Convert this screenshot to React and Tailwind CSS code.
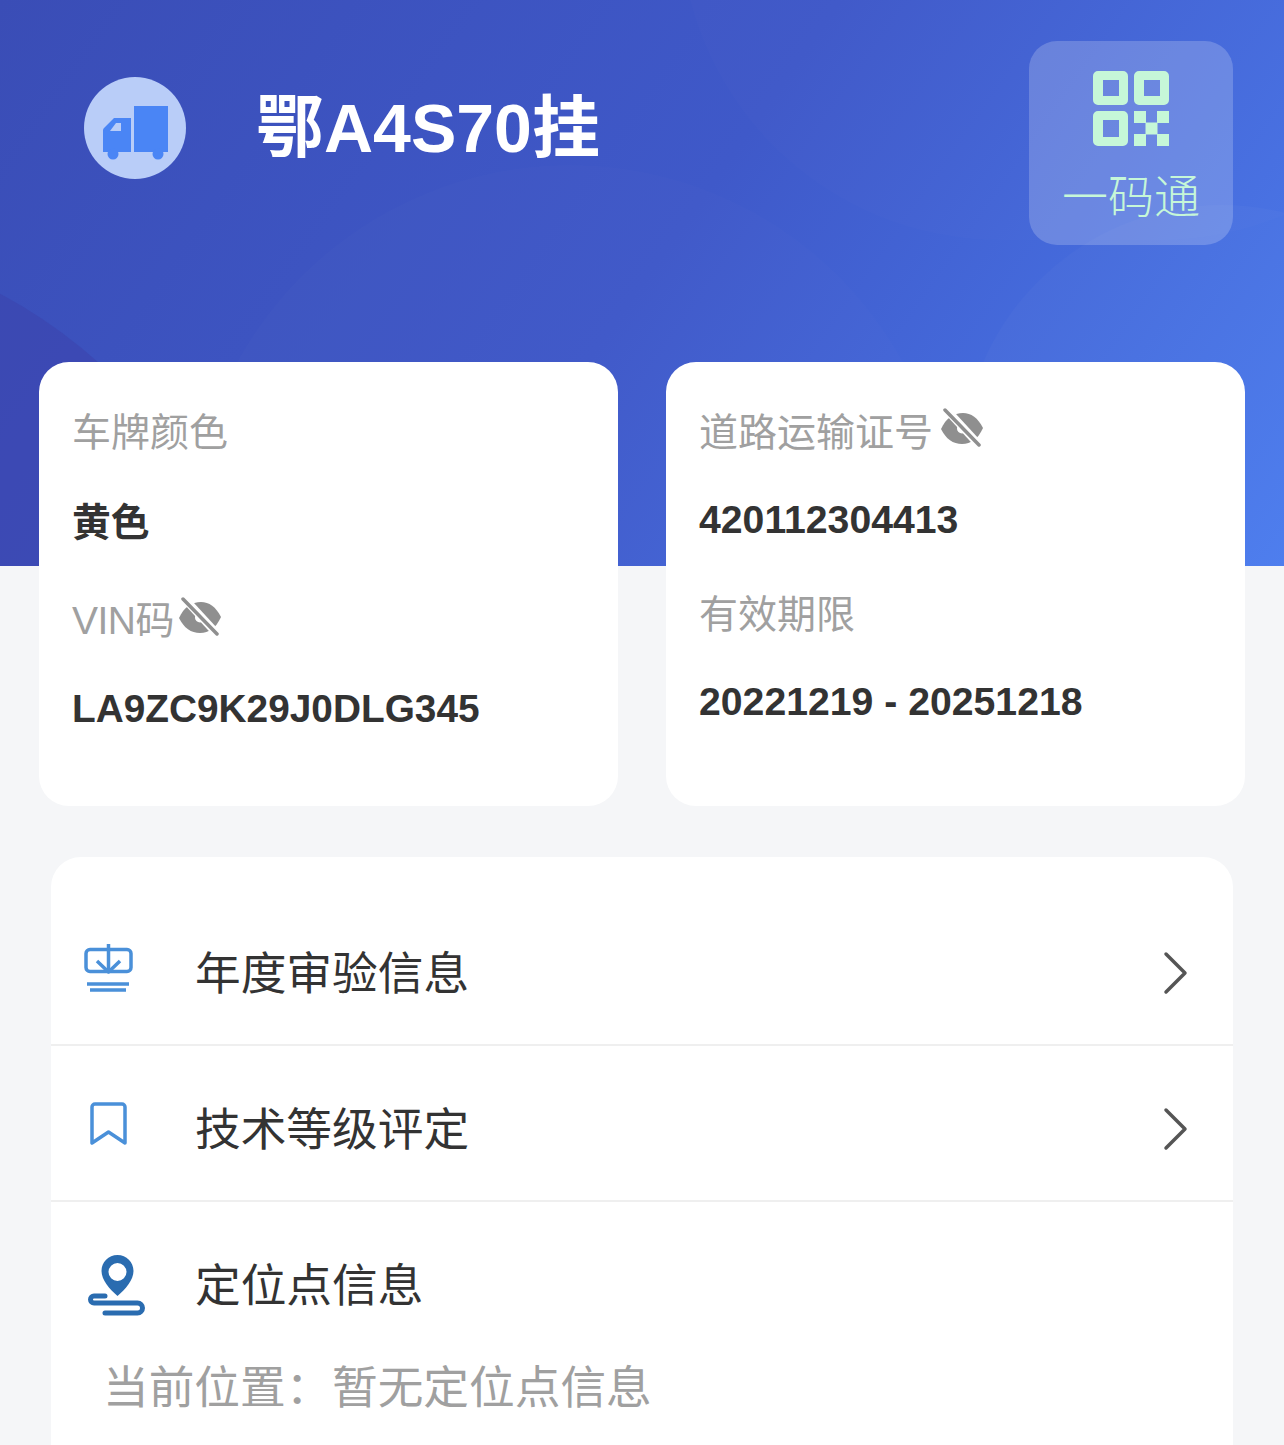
const EyeOff = ({ className }) => (
  <svg className={className} viewBox="0 0 42 40" fill="none">
    <path d="M0 21C5 10 13 5 22 5c8 0 15 5 20 15C37 31 30 36 21 36 12 36 5 31 0 21Z" fill="#8f8f8f" />
    <circle cx="21" cy="20.500" r="5" fill="#fff" />
    <path d="M4 0l35 38" stroke="#fff" strokeWidth="8" />
    <path d="M4 2l34 35" stroke="#8f8f8f" strokeWidth="3.500" strokeLinecap="round" />
  </svg>
);

const Chevron = () => (
  <svg className="h-[44px] w-[26px] shrink-0" viewBox="0 0 26 44" fill="none">
    <path d="M4 3l19 19L4 41" stroke="#555" strokeWidth="3.500" strokeLinecap="round" strokeLinejoin="round" />
  </svg>
);

const InfoItem = ({ label, value, icon, labelClass, valueClass }) => (
  <>
    <div className={`flex h-[48px] items-center whitespace-nowrap text-[39px] leading-[48px] text-[#a0a0a0] ${labelClass}`}>
      {label}
      {icon}
    </div>
    <div className={`h-[48px] font-bold leading-[48px] text-[#333] ${valueClass}`}>{value}</div>
  </>
);

const MenuRow = ({ icon, title, arrow = true, className }) => (
  <div className={`flex h-[142px] items-center pl-[144px] pr-[45px] ${className}`}>
    <div className="absolute left-[84px] flex w-[64px] justify-start">{icon}</div>
    <span className="flex-1 pt-[4px] text-[45.700px] leading-[60px] text-[#333]">{title}</span>
    {arrow && <Chevron />}
  </div>
);

export default function App() {
  return (
    <div
      className="relative h-[1445px] overflow-hidden bg-[#f5f6f8]"
      style={{ fontFamily: '"Liberation Sans", "Noto Sans CJK SC", sans-serif' }}
    >
      {/* header */}
      <div className="relative h-[566px] overflow-hidden bg-[linear-gradient(125deg,#3a4db6_0%,#3f59c9_50%,#4a7bee_100%)]">
        <div className="absolute left-[-735px] top-[235px] h-[1000px] w-[1000px] rounded-full bg-[#3c44ad]/60" />
        <div className="absolute left-[190px] top-[165px] h-[760px] w-[760px] rounded-full bg-white/[0.012]" />
        <div className="absolute left-[680px] top-[-400px] h-[640px] w-[800px] rounded-full bg-white/[0.01]" />
        <div className="absolute left-[962px] top-[205px] h-[520px] w-[520px] rounded-full bg-white/[0.025]" />

        <div className="relative flex pl-[84px] pr-[51px] pt-[41px]">
          <div className="mt-[36px] flex h-[102px] w-[102px] shrink-0 items-center justify-center rounded-full bg-[#b9cdf8]">
            <svg className="ml-[1px] mt-[6px] h-[60px] w-[66px] blur-[0.7px]" viewBox="0 0 66 60" fill="#4a85f5">
              <path d="M31 5h34v46H31z" />
              <path fillRule="evenodd" d="M11 17h17v34H0V30a4 4 0 0 1 1-3Zm2 5-6 8h11v-8Z" />
              <circle cx="10" cy="53" r="5.500" />
              <circle cx="55" cy="53" r="5.500" />
            </svg>
          </div>
          <h1 className="ml-[70px] mt-[43px] flex-1 text-[68px] font-bold leading-[88px] text-white">鄂A4S70挂</h1>
          <div className="flex h-[204px] w-[204px] shrink-0 flex-col items-center rounded-[28px] bg-white/20 pt-[29px] text-[#c6f7d8]">
            <svg className="h-[76px] w-[76px]" viewBox="0 0 76 76" fill="currentColor">
              <path fillRule="evenodd" d="M5 1h25a5 5 0 0 1 5 5v24a5 5 0 0 1-5 5H5a5 5 0 0 1-5-5V6a5 5 0 0 1 5-5Zm5 9v16h16V10Z" />
              <path fillRule="evenodd" d="M46 1h25a5 5 0 0 1 5 5v24a5 5 0 0 1-5 5H46a5 5 0 0 1-5-5V6a5 5 0 0 1 5-5Zm5 9v16h16V10Z" />
              <path fillRule="evenodd" d="M5 41h25a5 5 0 0 1 5 5v25a5 5 0 0 1-5 5H5a5 5 0 0 1-5-5V46a5 5 0 0 1 5-5Zm5 9v17h16V50Z" />
              <path d="M41 41h12v12H41zM64 41h12v12H64zM52.500 52.500h12v12h-12zM41 64h12v12H41zM64 64h12v12H64z" />
            </svg>
            <span className="mt-[21px] text-[46px] font-light leading-[60px]">一码通</span>
          </div>
        </div>
      </div>

      {/* info cards */}
      <div className="relative mt-[-204px] flex gap-[48px] px-[39px]">
        <div className="h-[444px] flex-1 rounded-[30px] bg-white pl-[33px] pt-[47px]">
          <InfoItem label="车牌颜色" value="黄色" valueClass="mt-[42px] text-[38.800px]" />
          <InfoItem
            label="VIN码"
            value="LA9ZC9K29J0DLG345"
            labelClass="mt-[50px] tracking-[-0.5px]"
            valueClass="mt-[40px] text-[38.800px]"
            icon={<EyeOff className="ml-[5px] mt-[-8px] h-[40px] w-[42px]" />}
          />
        </div>
        <div className="h-[444px] flex-1 rounded-[30px] bg-white pl-[33px] pt-[47px]">
          <InfoItem
            label="道路运输证号"
            value="420112304413"
            valueClass="mt-[39px] text-[39.200px]"
            icon={<EyeOff className="ml-[8px] mt-[-10px] h-[40px] w-[42px]" />}
          />
          <InfoItem label="有效期限" value="20221219 - 20251218" labelClass="mt-[47px]" valueClass="mt-[39px] text-[39.200px]" />
        </div>
      </div>

      {/* menu */}
      <div className="mx-[51px] mt-[51px] h-[620px] rounded-[30px] bg-white pt-[45px]">
        <MenuRow
          title="年度审验信息"
          icon={
            <svg className="mt-[-10px] h-[48px] w-[50px]" viewBox="0 0 50 48" fill="none" stroke="#4a90d9" strokeWidth="3.500">
              <rect x="2" y="5.500" width="45" height="22" rx="4" />
              <path d="M24.500 0v27" />
              <path d="M13 17l11.500 11L36 17" strokeLinejoin="round" />
              <path d="M3 40h42M6 46h36" />
            </svg>
          }
        />
        <div className="border-t-2 border-[#efefef] pt-[12px]">
          <MenuRow
            title="技术等级评定"
            icon={
              <svg className="ml-[5px] mt-[-10px] h-[44px] w-[39px]" viewBox="0 0 39 44" fill="none" stroke="#4a90d9" strokeWidth="3.500" strokeLinejoin="round" strokeLinecap="round">
                <path d="M6 2h27a3 3 0 0 1 3 3v36L19.500 30 3 41V5a3 3 0 0 1 3-3Z" />
              </svg>
            }
          />
        </div>
        <div className="border-t-2 border-[#efefef] pt-[12px]">
          <MenuRow
            title="定位点信息"
            arrow={false}
            icon={
              <svg className="ml-[4px] mt-[2px] h-[62px] w-[58px]" viewBox="0 0 58 62" fill="none">
                <path fillRule="evenodd" d="M29.500 0c9 0 16 7 16 16 0 9-8 18-16 25-8-7-16-16-16-25 0-9 7-16 16-16Zm0 8a9 9 0 1 0 0 18 9 9 0 0 0 0-18Z" fill="#2a6cb0" />
                <path d="M17 41H6a3.500 3.500 0 0 0 0 7H49.500a5 5 0 0 1 0 10H17" stroke="#2a6cb0" strokeWidth="5" strokeLinecap="round" />
              </svg>
            }
          />
        </div>
        <p className="mt-[10px] flex whitespace-nowrap pl-[52px] text-[45.700px] leading-[46px] text-[#a0a0a0]">
          <span className="w-[229px]">当前位置：</span>
          <span>暂无定位点信息</span>
        </p>
      </div>
    </div>
  );
}
